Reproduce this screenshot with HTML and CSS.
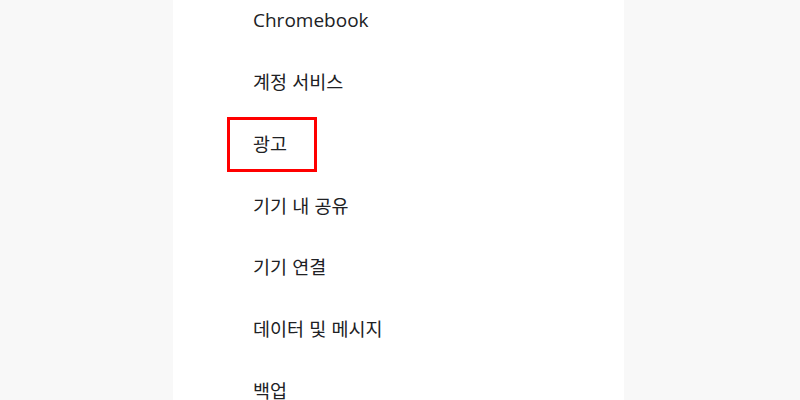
FILE: index.html
```html
<!DOCTYPE html>
<html lang="ko">
<head>
<meta charset="utf-8">
<link rel="stylesheet" href="styles.css">
</head>
<body>
<div class="panel">
  <ul class="menu">
    <li class="item latin">Chromebook</li>
    <li class="item">계정 서비스</li>
    <li class="item highlighted">광고</li>
    <li class="item">기기 내 공유</li>
    <li class="item">기기 연결</li>
    <li class="item">데이터 및 메시지</li>
    <li class="item">백업</li>
  </ul>
</div>
</body>
</html>
```
FILE: styles.css
```css
html, body {
  margin: 0;
  padding: 0;
  background: #f8f8f8;
  height: 400px;
  overflow: hidden;
}
.panel {
  margin-left: 173px;
  width: 451px;
  height: 400px;
  background: #ffffff;
  overflow: hidden;
}
.menu {
  list-style: none;
  margin: -11px 0 0 0;
  padding: 0;
}
.item {
  height: 61.67px;
  display: flex;
  align-items: center;
  padding-left: 80px;
  font-family: "Noto Sans CJK KR", sans-serif;
  font-size: 18.5px;
  color: #202124;
  position: relative;
}
.latin {
  font-family: "Open Sans", sans-serif;
  font-size: 19px;
}
.highlighted::after {
  content: "";
  position: absolute;
  left: 54px;
  top: 5px;
  width: 84px;
  height: 49px;
  border: 3px solid #ff0000;
}
```
